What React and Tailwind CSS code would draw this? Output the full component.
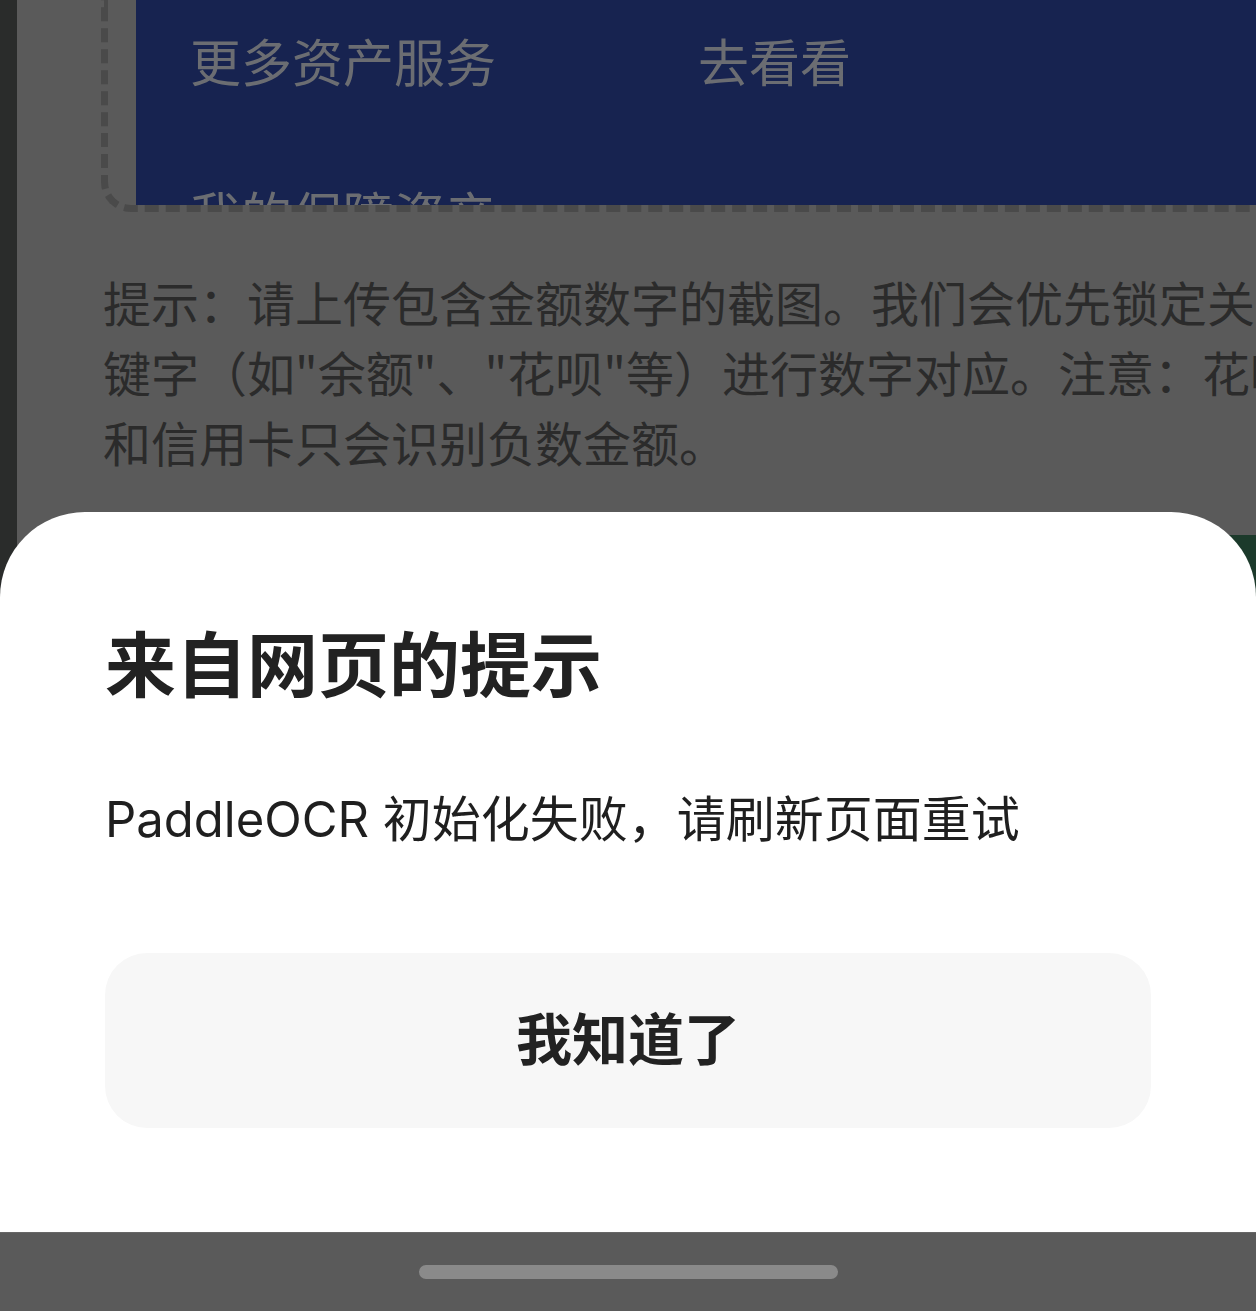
import React from 'react';

// dimmed page behind the dialog, then the bottom sheet + nav bar

const cjk = { fontFamily: '"Noto Sans CJK SC", "Noto Sans", sans-serif' };
const mixed = { fontFamily: 'Inter, "Noto Sans CJK SC", sans-serif' };

const rows = [
    { label: '更多资产服务', action: '去看看' },
    { label: '我的保障资产', action: '' },
];

function UploadPreview() {
    return (
        <div className="ml-[84px] w-[1300px] h-[212px] shrink-0 border-l-[7px] border-b-[7px] border-dashed border-[#4a4a4a] rounded-bl-[30px] overflow-hidden pl-[28px]">
            <div className="h-full bg-[#172350] pl-[54px] pt-[35px] text-[#6b6d72]" style={cjk}>
                {rows.map((row) => (
                    <div key={row.label} className="flex h-[153px]">
                        <div className="w-[508px] text-[51px] leading-[51px]">{row.label}</div>
                        <div className="text-[51px] leading-[51px]">{row.action}</div>
                    </div>
                ))}
            </div>
        </div>
    );
}

function Background() {
    return (
        <div className="flex h-full">
            <div className="w-[17px] shrink-0 bg-[#2a2c2b]" />
            <div className="flex flex-col">
                <UploadPreview />
                {/* lines broken as in the capture; the rest runs off screen */}
                <p className="ml-[86px] mt-[54px] w-[1400px] whitespace-nowrap text-[48px] leading-[70px] text-[#2b2b2b]" style={cjk}>
                    提示：请上传包含金额数字的截图。我们会优先锁定关<br />
                    键字（如"余额"、"花呗"等）进行数字对应。注意：花呗<br />
                    和信用卡只会识别负数金额。
                </p>
                <div className="ml-[86px] mt-[59px] w-[1250px] h-[150px] bg-[#1c3a2b]" />
            </div>
        </div>
    );
}

function AlertSheet() {
    return (
        <div className="absolute inset-x-0 bottom-0 flex flex-col">
            <div className="bg-white rounded-t-[85px] px-[105px] pt-[113px] pb-[104px]">
                <h2 className="text-[71px] leading-[70px] font-bold text-[#222222]" style={cjk}>来自网页的提示</h2>
                <p className="mt-[100px] text-[49px] leading-[49px] text-[#1f1f1f]" style={mixed}>
                    PaddleOCR 初始化失败，请刷新页面重试
                </p>
                <button className="mt-[109px] w-full h-[175px] pb-[10px] rounded-[42px] bg-[#f7f7f7] flex items-center justify-center text-[56px] leading-[56px] font-bold text-[#222222]" style={cjk}>
                    我知道了
                </button>
            </div>
            <div className="h-[79px] bg-[#5a5a5a] border-t border-[#676767] flex justify-center">
                <div className="mt-[32px] w-[419px] h-[14px] rounded-full bg-[#8a8a8a]" />
            </div>
        </div>
    );
}

export default function App() {
    return (
        <div className="relative w-[1256px] h-[1311px] overflow-hidden bg-[#5a5a5a]">
            <Background />
            <AlertSheet />
        </div>
    );
}
